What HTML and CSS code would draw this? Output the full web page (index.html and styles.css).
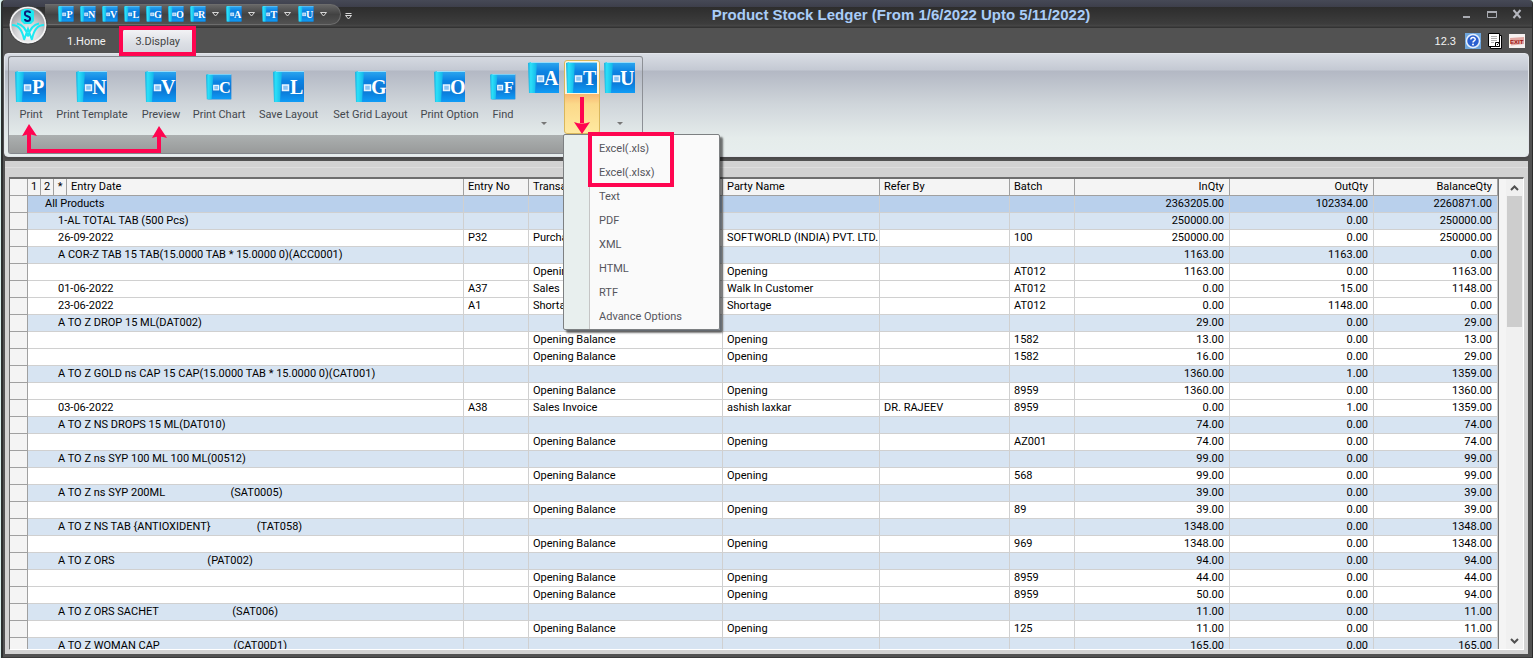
FILE: index.html
```html
<!DOCTYPE html>
<html lang="en">
<head>
<meta charset="utf-8">
<title>Product Stock Ledger</title>
<link rel="stylesheet" href="styles.css">
</head>
<body>
<svg class="defs" aria-hidden="true">
  <defs>
    <linearGradient id="page" x1="0" y1="0" x2="0" y2="1">
      <stop offset="0" stop-color="#2fa8ee"/><stop offset=".3" stop-color="#0c84e4"/><stop offset=".6" stop-color="#0b74d2"/><stop offset="1" stop-color="#0f9cf6"/>
    </linearGradient>
    <linearGradient id="spine" x1="0" y1="0" x2="1" y2="0">
      <stop offset="0" stop-color="#1fa9dc"/><stop offset=".3" stop-color="#2be0f8"/><stop offset="1" stop-color="#12b4ea"/>
    </linearGradient>
    <radialGradient id="orb" cx=".5" cy=".75" r=".7">
      <stop offset="0" stop-color="#ffffff"/><stop offset=".5" stop-color="#cfcfd2"/><stop offset="1" stop-color="#8d8f94"/>
    </radialGradient>
    <symbol id="book" viewBox="0 0 32 32">
      <path d="M1 1h30v30H2z" fill="#0a6cc4"/>
      <path d="M3 0h28v31H3z" fill="url(#page)"/>
      <path d="M0 1l3-1h6L7 31H1z" fill="url(#spine)"/>
      <path d="M3 .5h28" stroke="#9adcf8"/>
      <rect x="9.500" y="14" width="6" height="5.500" fill="#8cc4f4" stroke="#e8f4ff" stroke-width="1.500"/>
    </symbol>
  </defs>
</svg>
<div class="window">
  <header class="titlebar">
    <button class="orb" aria-label="Application menu">
      <svg viewBox="0 0 40 40">
        <circle cx="20" cy="20" r="19" fill="url(#orb)" stroke="#3a3a3a"/>
        <circle cx="20" cy="20" r="17.500" fill="none" stroke="#f4f4f4" stroke-width="1.500"/>
        <path d="M13 6l3-2h6l4 2v10l-3 3h-7l-3-3z" fill="#1ee9f2"/>
        <path d="M22 8c0-2.500-5-2.500-5 0v1.500c0 2 5 1.500 5 3.500v1c0 2.500-5 2.500-5 0" fill="none" stroke="#0b1e7a" stroke-width="2"/>
        <path d="M4 20c6 0 10 4 12 14M36 20c-6 0-10 4-12 14M9 18.500c6 1 9 5 11 13M31 18.500c-6 1-9 5-11 13M16 35l4-11 4 11" fill="none" stroke="#1ee9f2" stroke-width="2"/>
      </svg>
    </button>
    <nav class="quick" aria-label="Quick access">
      <button class="q" aria-label="Print"><svg viewBox="0 0 32 32"><use href="#book"/><text x="17" y="23">P</text></svg></button>
      <button class="q" aria-label="Print Template"><svg viewBox="0 0 32 32"><use href="#book"/><text x="16" y="23">N</text></svg></button>
      <button class="q" aria-label="Preview"><svg viewBox="0 0 32 32"><use href="#book"/><text x="16" y="23">V</text></svg></button>
      <button class="q" aria-label="Save Layout"><svg viewBox="0 0 32 32"><use href="#book"/><text x="17" y="23">L</text></svg></button>
      <button class="q" aria-label="Set Grid Layout"><svg viewBox="0 0 32 32"><use href="#book"/><text x="16" y="23">G</text></svg></button>
      <button class="q" aria-label="Print Option"><svg viewBox="0 0 32 32"><use href="#book"/><text x="16" y="23">O</text></svg></button>
      <button class="q drop" aria-label="R menu"><svg viewBox="0 0 32 32"><use href="#book"/><text x="16" y="23">R</text></svg><svg class="chev" viewBox="0 0 7 5"><path d="M.5.500h6L3.500 4z"/></svg></button>
      <button class="q drop" aria-label="A menu"><svg viewBox="0 0 32 32"><use href="#book"/><text x="16" y="23">A</text></svg><svg class="chev" viewBox="0 0 7 5"><path d="M.5.500h6L3.500 4z"/></svg></button>
      <button class="q drop" aria-label="T menu"><svg viewBox="0 0 32 32"><use href="#book"/><text x="17" y="23">T</text></svg><svg class="chev" viewBox="0 0 7 5"><path d="M.5.500h6L3.500 4z"/></svg></button>
      <button class="q drop" aria-label="U menu"><svg viewBox="0 0 32 32"><use href="#book"/><text x="16" y="23">U</text></svg><svg class="chev" viewBox="0 0 7 5"><path d="M.5.500h6L3.500 4z"/></svg></button>
    </nav>
    <button class="custom" aria-label="Customize"><svg viewBox="0 0 7 7"><path d="M.5.500h6M.5 2.500h6L3.500 6z" fill="none" stroke="#d8d8d8"/></svg></button>
    <h1>Product Stock Ledger (From 1/6/2022 Upto 5/11/2022)</h1>
    <div class="winbtns">
      <button aria-label="Minimize"><svg viewBox="0 0 10 10"><path d="M1 8h7" stroke="#a9abb2" stroke-width="2"/></svg></button>
      <button aria-label="Maximize"><svg viewBox="0 0 10 10"><path d="M.5 2.500h9v6h-9z" fill="none" stroke="#a9abb2"/><path d="M0 3h10" stroke="#a9abb2" stroke-width="2"/></svg></button>
      <button aria-label="Close"><svg viewBox="0 0 10 10"><path d="M1.500 1l7 8M8.500 1l-7 8" stroke="#b4b6bd" stroke-width="2"/></svg></button>
    </div>
  </header>

  <div class="tabs">
    <button class="tab">1.Home</button>
    <button class="tab on">3.Display</button>
    <span class="version">12.3</span>
    <button class="sys" aria-label="Help"><svg viewBox="0 0 16 16"><path d="M0 0h16v16H0z" fill="#6ea5dc"/><circle cx="8" cy="8" r="6.500" fill="#2a5fd0" stroke="#e6f0fc" stroke-width="1.500"/><path d="M5.800 6.500c0-3 4.600-2.600 4.400 0C10 8 8 7.800 8 9.500" fill="none" stroke="#fff" stroke-width="1.500"/><circle cx="8" cy="11.500" r="1" fill="#fff"/></svg></button>
    <button class="sys" aria-label="Notes"><svg viewBox="0 0 16 16"><path d="M3.500 2.500h11v13h-11z" fill="#fff" stroke="#000"/><path d="M1.500.500h11v13h-11z" fill="#fff" stroke="#000"/><path d="M4 3.500h6M4 5.500h6M4 7.500h6M4 9.500h3" stroke="#b0b0b0"/><path d="M8.500 9.500h4v4h-4z" fill="#fff" stroke="#000"/><path d="M10 12l1.500-1.500" stroke="#000"/></svg></button>
    <button class="sys" aria-label="Exit"><svg viewBox="0 0 16 16"><path d="M0 1h16v14H0z" fill="#f6f1f0"/><path d="M1 5l14-1v7L2 12.500z" fill="#e3a9a4"/><text class="exit" x="1" y="11">EXIT</text></svg></button>
  </div>

  <section class="ribbon">
    <div class="group">
      <div class="tools">
        <button class="tool w36"><svg viewBox="0 0 32 32"><use href="#book"/><text x="17" y="23">P</text></svg><span>Print</span></button>
        <button class="tool w86"><svg viewBox="0 0 32 32"><use href="#book"/><text x="16" y="23">N</text></svg><span>Print Template</span></button>
        <button class="tool w50"><svg viewBox="0 0 32 32"><use href="#book"/><text x="16" y="23">V</text></svg><span>Preview</span></button>
        <button class="tool w66 small"><svg viewBox="0 0 32 32"><use href="#book"/><text x="16" y="23">C</text></svg><span>Print Chart</span></button>
        <button class="tool w74"><svg viewBox="0 0 32 32"><use href="#book"/><text x="17" y="23">L</text></svg><span>Save Layout</span></button>
        <button class="tool w90"><svg viewBox="0 0 32 32"><use href="#book"/><text x="16" y="23">G</text></svg><span>Set Grid Layout</span></button>
        <button class="tool w68"><svg viewBox="0 0 32 32"><use href="#book"/><text x="16" y="23">O</text></svg><span>Print Option</span></button>
        <button class="tool w42 small"><svg viewBox="0 0 32 32"><use href="#book"/><text x="17" y="23">F</text></svg><span>Find</span></button>
        <button class="split" aria-label="A"><svg viewBox="0 0 32 32"><use href="#book"/><text x="16" y="23">A</text></svg><i></i></button>
        <div class="host">
          <button class="split open" aria-label="Export to"><svg viewBox="0 0 32 32"><use href="#book"/><text x="17" y="23">T</text></svg></button>
          <div class="menu" role="menu">
            <button role="menuitem">Excel(.xls)</button>
            <button role="menuitem">Excel(.xlsx)</button>
            <button role="menuitem">Text</button>
            <button role="menuitem">PDF</button>
            <button role="menuitem">XML</button>
            <button role="menuitem">HTML</button>
            <button role="menuitem">RTF</button>
            <button role="menuitem">Advance Options</button>
          </div>
        </div>
        <button class="split" aria-label="U"><svg viewBox="0 0 32 32"><use href="#book"/><text x="16" y="23">U</text></svg><i></i></button>
      </div>
      <div class="caption"></div>
    </div>
  </section>

  <main class="content">
    <div class="grid">
      <table>
        <colgroup><col class="c18"><col class="c13"><col class="c13"><col class="c13"><col><col class="c65"><col class="c194"><col class="c157"><col class="c130"><col class="c65"><col class="c155"><col class="c144"><col class="c124"></colgroup>
        <thead>
          <tr><th></th><th class="k">1</th><th class="k">2</th><th class="k">*</th><th>Entry Date</th><th>Entry No</th><th>Transaction Type</th><th>Party Name</th><th>Refer By</th><th>Batch</th><th class="n">InQty</th><th class="n">OutQty</th><th class="n">BalanceQty</th></tr>
        </thead>
        <tbody>
          <tr class="all"><th></th><td colspan="4">All Products</td><td></td><td></td><td></td><td></td><td></td><td>2363205.00</td><td>102334.00</td><td>2260871.00</td></tr>
          <tr class="g"><th></th><td colspan="4">1-AL TOTAL TAB (500 Pcs)</td><td></td><td></td><td></td><td></td><td></td><td>250000.00</td><td>0.00</td><td>250000.00</td></tr>
          <tr><th></th><td colspan="4">26-09-2022</td><td>P32</td><td>Purchase Invoice</td><td>SOFTWORLD (INDIA) PVT. LTD.</td><td></td><td>100</td><td>250000.00</td><td>0.00</td><td>250000.00</td></tr>
          <tr class="g"><th></th><td colspan="4">A COR-Z TAB 15 TAB(15.0000 TAB * 15.0000 0)(ACC0001)</td><td></td><td></td><td></td><td></td><td></td><td>1163.00</td><td>1163.00</td><td>0.00</td></tr>
          <tr><th></th><td colspan="4"></td><td></td><td>Opening Balance</td><td>Opening</td><td></td><td>AT012</td><td>1163.00</td><td>0.00</td><td>1163.00</td></tr>
          <tr><th></th><td colspan="4">01-06-2022</td><td>A37</td><td>Sales Invoice</td><td>Walk In Customer</td><td></td><td>AT012</td><td>0.00</td><td>15.00</td><td>1148.00</td></tr>
          <tr><th></th><td colspan="4">23-06-2022</td><td>A1</td><td>Shortage</td><td>Shortage</td><td></td><td>AT012</td><td>0.00</td><td>1148.00</td><td>0.00</td></tr>
          <tr class="g"><th></th><td colspan="4">A TO Z DROP 15 ML(DAT002)</td><td></td><td></td><td></td><td></td><td></td><td>29.00</td><td>0.00</td><td>29.00</td></tr>
          <tr><th></th><td colspan="4"></td><td></td><td>Opening Balance</td><td>Opening</td><td></td><td>1582</td><td>13.00</td><td>0.00</td><td>13.00</td></tr>
          <tr><th></th><td colspan="4"></td><td></td><td>Opening Balance</td><td>Opening</td><td></td><td>1582</td><td>16.00</td><td>0.00</td><td>29.00</td></tr>
          <tr class="g"><th></th><td colspan="4">A TO Z GOLD ns CAP 15 CAP(15.0000 TAB * 15.0000 0)(CAT001)</td><td></td><td></td><td></td><td></td><td></td><td>1360.00</td><td>1.00</td><td>1359.00</td></tr>
          <tr><th></th><td colspan="4"></td><td></td><td>Opening Balance</td><td>Opening</td><td></td><td>8959</td><td>1360.00</td><td>0.00</td><td>1360.00</td></tr>
          <tr><th></th><td colspan="4">03-06-2022</td><td>A38</td><td>Sales Invoice</td><td>ashish laxkar</td><td>DR. RAJEEV</td><td>8959</td><td>0.00</td><td>1.00</td><td>1359.00</td></tr>
          <tr class="g"><th></th><td colspan="4">A TO Z NS DROPS 15 ML(DAT010)</td><td></td><td></td><td></td><td></td><td></td><td>74.00</td><td>0.00</td><td>74.00</td></tr>
          <tr><th></th><td colspan="4"></td><td></td><td>Opening Balance</td><td>Opening</td><td></td><td>AZ001</td><td>74.00</td><td>0.00</td><td>74.00</td></tr>
          <tr class="g"><th></th><td colspan="4">A TO Z ns SYP 100 ML 100 ML(00512)</td><td></td><td></td><td></td><td></td><td></td><td>99.00</td><td>0.00</td><td>99.00</td></tr>
          <tr><th></th><td colspan="4"></td><td></td><td>Opening Balance</td><td>Opening</td><td></td><td>568</td><td>99.00</td><td>0.00</td><td>99.00</td></tr>
          <tr class="g"><th></th><td colspan="4">A TO Z ns SYP 200ML                        (SAT0005)</td><td></td><td></td><td></td><td></td><td></td><td>39.00</td><td>0.00</td><td>39.00</td></tr>
          <tr><th></th><td colspan="4"></td><td></td><td>Opening Balance</td><td>Opening</td><td></td><td>89</td><td>39.00</td><td>0.00</td><td>39.00</td></tr>
          <tr class="g"><th></th><td colspan="4">A TO Z NS TAB {ANTIOXIDENT}                 (TAT058)</td><td></td><td></td><td></td><td></td><td></td><td>1348.00</td><td>0.00</td><td>1348.00</td></tr>
          <tr><th></th><td colspan="4"></td><td></td><td>Opening Balance</td><td>Opening</td><td></td><td>969</td><td>1348.00</td><td>0.00</td><td>1348.00</td></tr>
          <tr class="g"><th></th><td colspan="4">A TO Z ORS                                  (PAT002)</td><td></td><td></td><td></td><td></td><td></td><td>94.00</td><td>0.00</td><td>94.00</td></tr>
          <tr><th></th><td colspan="4"></td><td></td><td>Opening Balance</td><td>Opening</td><td></td><td>8959</td><td>44.00</td><td>0.00</td><td>44.00</td></tr>
          <tr><th></th><td colspan="4"></td><td></td><td>Opening Balance</td><td>Opening</td><td></td><td>8959</td><td>50.00</td><td>0.00</td><td>94.00</td></tr>
          <tr class="g"><th></th><td colspan="4">A TO Z ORS SACHET                           (SAT006)</td><td></td><td></td><td></td><td></td><td></td><td>11.00</td><td>0.00</td><td>11.00</td></tr>
          <tr><th></th><td colspan="4"></td><td></td><td>Opening Balance</td><td>Opening</td><td></td><td>125</td><td>11.00</td><td>0.00</td><td>11.00</td></tr>
          <tr class="g"><th></th><td colspan="4">A TO Z WOMAN CAP                           (CAT00D1)</td><td></td><td></td><td></td><td></td><td></td><td>165.00</td><td>0.00</td><td>165.00</td></tr>
        </tbody>
      </table>
      <div class="scroll">
        <button aria-label="Scroll up"><svg viewBox="0 0 9 6"><path d="M1 5l3.500-3.500L8 5" fill="none" stroke="#505050" stroke-width="2"/></svg></button>
        <div class="track"><div class="thumb"></div></div>
        <button aria-label="Scroll down"><svg viewBox="0 0 9 6"><path d="M1 1l3.500 3.500L8 1" fill="none" stroke="#505050" stroke-width="2"/></svg></button>
      </div>
    </div>
  </main>
</div>
<svg class="marks" width="700" height="200" aria-hidden="true">
  <g fill="none" stroke="#ff0550" stroke-width="4">
    <path d="M121 28h73v26h-73z"/>
    <path d="M590 134h82v51h-82z"/>
    <path d="M29 133v18h130v-20"/>
    <path d="M582 97v26"/>
  </g>
  <path d="M29 124l8 12q-8-3-15 0zM159 126l8 12q-8-3-15 0zM582 134l8-12q-8 3-16 0z" fill="#ff0550"/>
</svg>
</body>
</html>
```
FILE: styles.css
```css
* { box-sizing: border-box; }
body { margin: 0; background: #d8efec; font: 11px/16px Roboto, "Liberation Sans", sans-serif; color: #000; overflow: hidden; }
button { margin: 0; padding: 0; border: 0; background: none; font: inherit; color: inherit; }
svg { display: block; }
svg text { font: bold 20px "Liberation Serif", serif; fill: #fff; }
svg text.exit { font: bold 6px "Liberation Sans", sans-serif; fill: #9c1414; }
.defs { position: absolute; width: 0; height: 0; }

.window { height: 100vh; margin-left: 1px; padding: 0 4px 3px; display: flex; flex-direction: column; background: #525252; border-left: 2px solid #2c2f2f; border-radius: 4px 4px 0 0; border-right: 1px solid #2c2c2c; border-bottom: 1px solid #3a3a3a; }

.titlebar { position: relative; height: 28px; margin: 0 -4px; padding: 0 10px 0 42px; display: flex; align-items: center; background: linear-gradient(#464956 0, #3d3f4b 7px, #2d2d2d 7px, #3d3d3d 24px, #474747 26px, #333 27px); border-radius: 4px 4px 0 0; }
.orb { position: absolute; left: 5px; top: 5px; width: 40px; height: 40px; z-index: 2; }
.quick { display: flex; gap: 6px; height: 21px; width: 296px; padding-left: 13px; align-items: center; border-radius: 0 11px 11px 0; border: 1px solid #6c6c6c; border-left: 0; background: linear-gradient(#666, #424242 50%, #525252); }
.q { display: flex; align-items: center; }
.q svg { width: 16px; height: 16px; }
.q.drop { gap: 6px; padding-right: 1px; }
.q .chev { width: 7px; height: 5px; fill: none; stroke: #d8d8d8; }
.custom { margin: 4px 0 0 4px; }
.custom svg { width: 7px; height: 7px; }
h1 { flex: 1; margin: 2px 12px 0 0; text-align: center; font: bold 15px/18px "Liberation Sans", sans-serif; color: #a9cdf8; white-space: nowrap; }
.winbtns { display: flex; gap: 15px; }
.winbtns svg { width: 10px; height: 10px; }

.tabs { height: 25px; display: flex; align-items: center; font-size: 11px; color: #f2f2f2; padding: 0 3px 0 49px; }
.tab { height: 25px; padding: 3px 11px 0; }
.tab.on { height: 24px; align-self: flex-end; width: 70px; margin-left: 6px; padding: 2px 0 0; color: #444; border-radius: 3px 3px 0 0; background: linear-gradient(#f4f4f6, #dcdfe5 60%, #d2d6dd); }
.version { margin: 0 9px 0 auto; font: 11px/16px "Liberation Sans", sans-serif; }
.sys { margin-left: 6px; }
.version + .sys { margin-left: 0; }
.sys svg { width: 16px; height: 16px; }

.ribbon { flex: none; margin: 0 -1px 0 -3px; padding: 2px 3px; border: 1px solid #e2e5ea; border-radius: 4px; box-shadow: 0 2px 1px #4a4a4a; background: linear-gradient(#d9dde4 0, #c4c9d3 16px, #b3b8c4 17px, #cfd5da 50px, #e5eceb 84px, #e7eeee); }
.group { width: 635px; border: 1px solid #84878d; border-right-color: #8d9096; border-radius: 3px; }
.tools { height: 78px; display: flex; padding-left: 4px; color: #44484e; }
.tool { flex: none; padding-top: 14px; display: flex; flex-direction: column; align-items: center; white-space: nowrap; }
.tool svg { width: 32px; height: 32px; }
.tool span { margin-top: 4px; }
.tool.small svg { width: 26px; height: 26px; margin: 3px 0; }
.w36 { width: 36px; } .w42 { width: 38px; } .w50 { width: 52px; } .w66 { width: 64px; } .w68 { width: 69px; } .w74 { width: 75px; } .w86 { width: 86px; } .w90 { width: 89px; }
.host { position: relative; }
.split { width: 38px; height: 78px; padding-top: 5px; display: flex; flex-direction: column; align-items: center; }
.tool + .split { margin-left: 3px; }
.split svg { width: 32px; height: 32px; }
.split i { margin-top: 28px; border: 3px solid transparent; border-top-color: #777; }
.split.open { width: 36px; margin: 3px 1px 0; height: 74px; padding-top: 1px; border: 1px solid #d9b75c; border-radius: 3px; background: linear-gradient(#fff6dc 0 33px, #f8b873 33px, #fbd98a 60%, #ffe9a0); }
.caption { height: 18px; background: linear-gradient(#acb0b0, #989a9a); }

.menu { position: absolute; z-index: 5; left: 0; top: 77px; width: 157px; padding: 2px 0 0 26px; border: 1px solid #7d8082; border-radius: 2px; background: linear-gradient(90deg, #e8efee 25px, #c5c5c5 25px, #c5c5c5 26px, #fafafa 26px); box-shadow: 3px 3px 2px #0008; display: flex; flex-direction: column; }
.menu button { height: 24px; padding-left: 9px; text-align: left; color: #55555c; white-space: nowrap; }

.content { flex: 1; min-height: 0; margin: 4px 0 0 -2px; padding: 7px 4px 4px; display: flex; background: linear-gradient(#d2d2d2 6px, #dedede 6px, #dedede 7px, #d2d2d2 7px); }
.grid { flex: 1; min-width: 0; margin-top: 9px; overflow: hidden; display: flex; border: 1px solid #fff; border-top: 2px solid #6e6e6e; border-left-color: #6e6e6e; background: #f4f4f4; }
table { flex: 1; min-width: 0; width: 0; table-layout: fixed; border-collapse: separate; border-spacing: 0; height: 0; align-self: flex-start; border-right: 1px solid #777; }
td, th { height: 17px; padding: 0 0 0 4px; border-right: 1px solid #d0d0d0; border-bottom: 1px solid #d0d0d0; font-weight: 400; text-align: left; line-height: 16px; white-space: pre; background: #fff; }
th { background: #f4f4f4; border-color: #a0a0a0; }
td[colspan] { padding-left: 30px; }
.all td[colspan] { padding-left: 17px; }
td:nth-last-child(-n+3), .n { text-align: right; padding-right: 5px; }
.k { padding: 0; text-align: center; }
.g td { background: #d7e4f2; }
.all td { background: #b9d0ec; }
.c13 { width: 13px; } .c18 { width: 18px; } .c65 { width: 65px; } .c194 { width: 194px; } .c157 { width: 157px; } .c130 { width: 130px; } .c155 { width: 155px; } .c144 { width: 144px; } .c124 { width: 124px; }
.scroll { width: 17px; margin-left: 7px; display: flex; flex-direction: column; background: #f0f0f0; }
.scroll button { height: 17px; display: flex; align-items: center; justify-content: center; }
.scroll svg { width: 9px; height: 6px; }
.track { flex: 1; }
.thumb { height: 30%; margin: 0 1px; background: #cdcdcd; }

.marks { position: absolute; left: 0; top: 0; z-index: 9; pointer-events: none; }
```
